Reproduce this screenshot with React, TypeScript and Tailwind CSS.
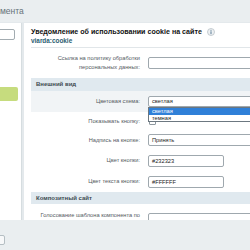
import React from 'react';

const labelCls =
  'w-[117px] shrink-0 pr-[8px] text-right text-[5.7px] leading-[9px] text-[#555b5f]';
const inputCls =
  'h-[12px] rounded-[2px] border border-[#9fa8ae] bg-white px-[3px] text-[5.7px] leading-[10px] text-[#222]';

const Section = ({ title, h }: { title: string; h: string }) => (
  <div className={`flex ${h} items-center bg-[#e0e9ef] pl-[5px] text-[6px] font-bold text-[#3d4a51]`}>
    {title}
  </div>
);

export default function App() {
  return (
    <div className="relative h-[250px] w-[250px] overflow-hidden bg-[#e4e9ec] font-['Liberation_Sans',Arial,sans-serif]">
      {/* page title, scrolled to the left */}
      <div className="flex h-[22px] items-center bg-[#eaeef0]">
        <div className="whitespace-nowrap text-[8.5px] leading-[10px] text-[#66737a]">мента</div>
      </div>

      <div className="mt-[1px] flex h-[227px] gap-[2px]">
        <aside className="w-[22px] shrink-0 overflow-hidden border-r border-[#d6dde0] bg-white">
          <div className="ml-[-20px] mt-[6px] h-[11px] w-[35px] rounded-[2px] border border-[#a3acb1] bg-white" />
          <div className="ml-[-20px] mt-[47px] h-[14px] w-[38px] rounded-[2px] bg-[#c6dc7e]" />
        </aside>

        <main className="min-w-0 flex-1 overflow-hidden bg-white pl-[7px]">
          <div className="border-b border-[#e1e6e9] pb-[2px] pt-[4px]">
            <div className="flex items-center gap-[5px] whitespace-nowrap text-[7.1px] font-bold leading-[10px] text-[#111]">
              Уведомление об использовании cookie на сайте
              <svg width="8" height="8" viewBox="0 0 8 8">
                <circle cx="4" cy="4" r="3.5" fill="#eef1f3" stroke="#b9c2c7" strokeWidth="0.8" />
                <rect x="3.5" y="3.3" width="1" height="2.8" fill="#5a7d96" />
                <circle cx="4" cy="2.3" r="0.55" fill="#5a7d96" />
              </svg>
            </div>
            <div className="text-[6.4px] font-bold leading-[8px] text-[#2a5d71]">viarda:cookie</div>
          </div>

          <div className="flex h-[30px] items-center whitespace-nowrap">
            <div className={labelCls}>
              Ссылка на политику обработки
              <br />
              персональных данных:
            </div>
            <div className={`${inputCls} w-[120px] shrink-0`} />
          </div>

          <Section title="Внешний вид" h="h-[13px]" />

          <div className="flex h-[21px] items-center whitespace-nowrap bg-[#f1f4f6]">
            <div className={labelCls}>Цветовая схема:</div>
            <div className="relative shrink-0">
              <div className="h-[11px] w-[120px] rounded-[2px] border border-[#9fa8ae] bg-white px-[3px] text-[5.7px] leading-[9px] text-[#222]">
                светлая
              </div>
              <div className="absolute left-0 top-[11px] z-10 w-[120px] border border-[#6c7780] bg-white text-[5.7px] leading-[6.5px]">
                <div className="bg-[#2f80d8] px-[3px] text-white">светлая</div>
                <div className="px-[3px] text-[#222]">темная</div>
              </div>
            </div>
          </div>

          <div className="flex h-[18px] items-center whitespace-nowrap">
            <div className={labelCls}>Показывать кнопку:</div>
            <div className="ml-[1px] h-[7px] w-[7px] rounded-[1px] border border-[#8e989f] bg-white" />
          </div>

          <div className="flex h-[20px] items-center whitespace-nowrap">
            <div className={labelCls}>Надпись на кнопке:</div>
            <div className={`${inputCls} w-[120px] shrink-0`}>Принять</div>
          </div>

          <div className="flex h-[21px] items-center whitespace-nowrap">
            <div className={labelCls}>Цвет кнопки:</div>
            <div className={`${inputCls} w-[76px] shrink-0`}>#232323</div>
          </div>

          <div className="flex h-[21px] items-center whitespace-nowrap">
            <div className={labelCls}>Цвет текста кнопки:</div>
            <div className={`${inputCls} w-[76px] shrink-0`}>#FFFFFF</div>
          </div>

          <Section title="Композитный сайт" h="h-[12px]" />

          <div className="flex h-[30px] items-start whitespace-nowrap">
            <div className={`${labelCls} pt-[7px]`}>
              Голосование шаблона компонента по
              <br />
              композитному сайту:
            </div>
            <div className={`${inputCls} mt-[9px] w-[120px] shrink-0`} />
          </div>
        </main>
      </div>

      {/* fixed button bar */}
      <div className="absolute bottom-0 left-0 right-0 top-[220px] bg-[#eaeef0]">
        <div className="absolute left-[-30px] top-[15px] h-[10px] w-[35px] rounded-[2px] border border-[#b5bec3] bg-[#f7f8f9]" />
      </div>
    </div>
  );
}
